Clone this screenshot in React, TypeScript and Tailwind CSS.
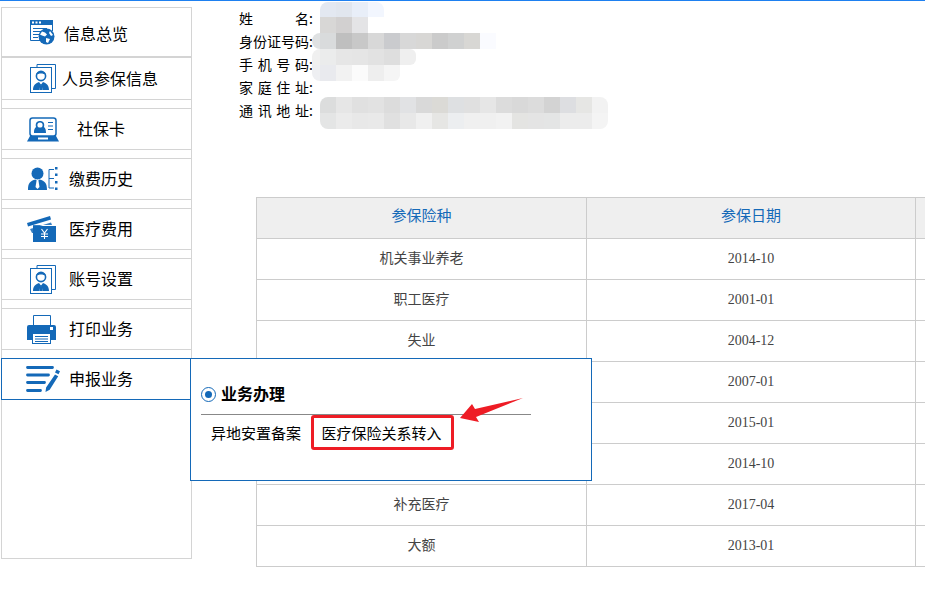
import type { ReactNode } from 'react';

const BLUE = '#1469b8';

function Svg({ w, h, children }: { w: number; h: number; children: ReactNode }) {
    return (
        <svg width={w} height={h} viewBox={`0 0 ${w} ${h}`} className="block shrink-0">
            {children}
        </svg>
    );
}

function BrowserIcon() {
    return (
        <Svg w={25} h={25}>
            <path d="M0.5 0.5H22.5V11M0.5 0.5V20.5H11" fill="none" stroke={BLUE} />
            <rect x="0" y="0" width="23" height="5" fill={BLUE} />
            <rect x="2" y="1.5" width="2" height="2" fill="#fff" />
            <rect x="5.5" y="1.5" width="2" height="2" fill="#fff" />
            <rect x="9" y="1.5" width="2" height="2" fill="#fff" />
            <path d="M3 8.5H17M3 11.5H12M3 14.5H9M3 17.5H8" stroke={BLUE} />
            <circle cx="16.5" cy="16.5" r="8" fill={BLUE} />
            <path d="M12 11.5l3 1 2 2-2 2-3-1-2-1zM16 18l4 1-2 4-2-1zM20 11l3 4-2 1-2-3z" fill="#fff" />
        </Svg>
    );
}

function PersonDocIcon() {
    return (
        <Svg w={26} h={29}>
            <path d="M7 3.5V0.5H25.5V24.5H22" fill="none" stroke={BLUE} />
            <rect x="0.5" y="3.5" width="21" height="25" fill="#fff" stroke={BLUE} />
            <circle cx="11" cy="12" r="4.6" fill="#fff" stroke={BLUE} strokeWidth="1.6" />
            <path d="M6 11c1-5 9-5 10 0-3-2-7-2-10 0z" fill={BLUE} />
            <path d="M3 26c0-5 3-7 6-8l1.5 2-1 6zM19 26c0-5-3-7-6-8l-1.5 2 1 6z" fill={BLUE} />
            <path d="M10.2 20h1.6l.6 6h-2.8z" fill={BLUE} />
        </Svg>
    );
}

function CardIcon() {
    return (
        <Svg w={32} h={25}>
            <rect x="3" y="1" width="26" height="18" rx="2.5" fill="#fff" stroke={BLUE} strokeWidth="1.5" />
            <path d="M7 16c0-4 1-5 2-6-1-4 1-6 4-6s5 2 4 6c1 1 2 2 2 6z" fill={BLUE} />
            <circle cx="13" cy="8" r="2.6" fill="#fff" />
            <path d="M21 5.500h5M21 9h5M21 12.500h5" stroke={BLUE} strokeWidth="1.2" />
            <path d="M3 19h26l3 5.500H0z" fill={BLUE} />
            <rect x="11" y="20.500" width="10" height="2" fill="#fff" />
        </Svg>
    );
}

function TreeUserIcon() {
    return (
        <Svg w={30} h={24}>
            <circle cx="9.500" cy="6.500" r="6" fill={BLUE} />
            <path d="M0 23c0-7 2-9 7.500-10.500l2 2 2-2c5.500 1.500 7.500 3.500 7.500 10.500z" fill={BLUE} />
            <path d="M8.500 14h2l1 6-2 2-2-2z" fill="#fff" />
            <path d="M21 2.500V21M21 2.500h5M21 11.500h5M21 21h5" fill="none" stroke={BLUE} />
            <rect x="27" y="0" width="2.500" height="2.500" fill={BLUE} />
            <rect x="27" y="6.500" width="2.500" height="2.500" fill={BLUE} />
            <rect x="27" y="14" width="2.500" height="2.500" fill={BLUE} />
            <rect x="27" y="20.500" width="2.500" height="2.500" fill={BLUE} />
        </Svg>
    );
}

function MoneyIcon() {
    return (
        <Svg w={29} h={26}>
            <path d="M0 7L23 0l1 3.500L1 10.500z" fill={BLUE} />
            <path d="M3 13l21-6.500 1 2.500H6v8H5z" fill={BLUE} opacity="0.85" />
            <rect x="6" y="10" width="23" height="16" fill={BLUE} />
            <path d="M14.500 13l3 4 3-4M14 18h7M14 20.500h7M17.500 17v6" fill="none" stroke="#fff" strokeWidth="1.100" />
        </Svg>
    );
}

function PrinterIcon() {
    return (
        <Svg w={29} h={29}>
            <path d="M6.500 10V0.500H23.500V10" fill="none" stroke={BLUE} />
            <path d="M2 10h25a2 2 0 0 1 2 2v13h-5v-7H5v7H0V12a2 2 0 0 1 2-2z" fill={BLUE} />
            <rect x="23" y="12" width="3" height="3" fill="#fff" />
            <rect x="5.500" y="18.500" width="18" height="10" fill="#fff" stroke={BLUE} />
            <path d="M8 21.500h13M8 24h13M8 26.500h13" stroke={BLUE} />
        </Svg>
    );
}

function ListPenIcon() {
    return (
        <Svg w={34} h={26}>
            <path d="M1.500 1.500h25M1.500 9h21M1.500 16.500h17M1.500 24.500h13" stroke={BLUE} strokeWidth="2.800" strokeLinecap="round" />
            <path d="M30.500 3.500l3.500 1.800-1.500 3-3.500-1.800zM29 8.500l3.200 1.700-8.500 13.500-4.200 2.300 .6-4.500z" fill={BLUE} />
        </Svg>
    );
}

const menu = [
    { label: '信息总览', icon: <BrowserIcon />, box: 'h-[50px] pl-[28px] border-b-2', text: 'ml-[9px] translate-y-px' },
    { label: '人员参保信息', icon: <PersonDocIcon />, box: 'h-[42px] pl-[28px] border-b', text: 'ml-[6px] -translate-y-px' },
    { label: '社保卡', icon: <CardIcon />, box: 'mt-[8px] h-[42px] pl-[25px] border-y', text: 'ml-[18px] -translate-y-px' },
    { label: '缴费历史', icon: <TreeUserIcon />, box: 'mt-[8px] h-[42px] pl-[26px] border-y', text: 'ml-[11px] -translate-y-px' },
    { label: '医疗费用', icon: <MoneyIcon />, box: 'mt-[8px] h-[42px] pl-[25px] border-y', text: 'ml-[13px] -translate-y-px' },
    { label: '账号设置', icon: <PersonDocIcon />, box: 'mt-[8px] h-[42px] pl-[28px] border-y', text: 'ml-[13px] -translate-y-px' },
    { label: '打印业务', icon: <PrinterIcon />, box: 'mt-[8px] h-[42px] pl-[25px] border-y', text: 'ml-[13px] -translate-y-px' },
];

const infoRows = ['姓名', '身份证号码', '手机号码', '家庭住址', '通讯地址'];

// the popup covers the names of rows 4 to 6
const rows = [
    ['机关事业养老', '2014-10'],
    ['职工医疗', '2001-01'],
    ['失业', '2004-12'],
    ['', '2007-01'],
    ['', '2015-01'],
    ['', '2014-10'],
    ['补充医疗', '2017-04'],
    ['大额', '2013-01'],
];

// mosaic over the personal data, 16px blocks; lead = a half block on the left
const mosaic: { box: string; lead?: boolean; colors: string[] }[] = [
    { box: 'mt-[1px] h-[15px] ml-[95px] rounded-t-lg', colors: ['#e3e8f1', '#e1e6ee', '#e8eef8', '#f2f6fe'] },
    { box: 'h-[16px] ml-[95px]', colors: ['#d8d7d6', '#d2d0d0', '#e4e4e6'] },
    { box: 'h-[16px] ml-[87px] rounded-l-lg', lead: true, colors: ['#dfe1e2', '#d9dbdc', '#bfbfbf', '#c8c8c8', '#d8d8d8', '#cacbce', '#d8d8d8', '#d8d7d5', '#cbcbcb', '#d0d1d1', '#d8d7d4', '#fafbff'] },
    { box: 'h-[16px] ml-[87px] rounded-tl-lg rounded-r-md', lead: true, colors: ['#f0f0f0', '#ebecec', '#e6e6e6', '#e5e5e5', '#e2e2e2', '#dedede', '#efefef'] },
    { box: 'h-[16px] ml-[87px] rounded-bl-lg rounded-br-md', lead: true, colors: ['#eeeff2', '#e9eaee', '#f2f2f2', '#fbfbfb', '#eeeeee', '#f5f5f5'] },
    { box: 'mt-[16px] h-[16px] ml-[95px] rounded-t-lg', colors: ['#dcdddd', '#e6e6e6', '#e0e0e0', '#e2e2e2', '#dcdcdc', '#e1e2e4', '#d9d9d9', '#dbdad6', '#dee0e2', '#e0e0e0', '#e6e6e6', '#dcdcdc', '#d9d9d9', '#dcdcdc', '#d3d3d3', '#dddee1', '#e6e6e4', '#f2f2f2'] },
    { box: 'h-[16px] ml-[95px] rounded-b-lg', colors: ['#e4e5e5', '#ebebeb', '#e8e8e8', '#e9e9e9', '#e0e0e0', '#e8e8e8', '#f0f0f0', '#e6e6e4', '#eceef0', '#f0f0f0', '#f0f0f0', '#f2f2f2', '#e4e4e2', '#e4e4e4', '#e4e5e5', '#ececec', '#ececec', '#f4f4f4'] },
];

const cellBorder = 'border-r border-[#cccccc]';

export default function App() {
    return (
        <div
            className="relative w-[925px] h-[602px] overflow-hidden bg-white border-t border-[#1e80f0] text-black text-[14px]"
            style={{ fontFamily: '"Noto Sans CJK SC", sans-serif' }}
        >
            <div className="flex items-start">
                {/* Sidebar */}
                <aside className="ml-px mt-[6px] w-[191px] h-[552px] shrink-0 border border-[#d4d4d4] bg-white text-[16px]">
                    {menu.map((item) => (
                        <div key={item.label} className={`flex items-center border-[#d4d4d4] ${item.box}`}>
                            {item.icon}
                            <span className={item.text}>{item.label}</span>
                        </div>
                    ))}
                    <div className="mt-[8px] h-[42px] pl-[24px] -ml-px flex items-center border border-[#1469b8]">
                        <ListPenIcon />
                        <span className="ml-[9px] -translate-y-px">申报业务</span>
                    </div>
                </aside>

                {/* Main */}
                <main className="relative flex-1 min-w-0 pl-[47px] pt-[5px]">
                    <div className="flex flex-col">
                        {infoRows.map((label) => (
                            <div key={label} className="flex h-[23px] items-center leading-none">
                                <span className="w-[70px] [text-align-last:justify]">{label}</span>
                                <span>:</span>
                            </div>
                        ))}
                    </div>

                    {/* blurred personal data */}
                    <div className="absolute left-[33px] top-0 w-[500px] flex flex-col">
                        {mosaic.map((row, i) => (
                            <div key={i} className={`flex overflow-hidden w-fit ${row.box}`}>
                                {row.colors.map((c, j) => (
                                    <div
                                        key={j}
                                        className={row.lead && j === 0 ? 'w-[8px] h-full' : 'w-[16px] h-full'}
                                        style={{ backgroundColor: c }}
                                    />
                                ))}
                            </div>
                        ))}
                    </div>

                    {/* Table */}
                    <div className="mt-[76px] ml-[17px] w-[800px] border border-[#cccccc] border-b-0">
                        <div className="grid grid-cols-[330px_329px_1fr] h-[41px] bg-[#efefef] text-[#1469b8] text-[15px] border-b border-[#cccccc]">
                            <div className={`flex items-center justify-center pb-[6px] ${cellBorder}`}>参保险种</div>
                            <div className={`flex items-center justify-center pb-[6px] ${cellBorder}`}>参保日期</div>
                            <div />
                        </div>
                        {rows.map((row, i) => (
                            <div key={i} className="grid grid-cols-[330px_329px_1fr] h-[41px] text-[#444444] border-b border-[#cccccc]">
                                <div className={`flex items-center justify-center pb-[3px] ${cellBorder}`}>{row[0]}</div>
                                <div
                                    className={`flex items-center justify-center pb-[2px] ${cellBorder}`}
                                    style={{ fontFamily: '"Liberation Serif", serif' }}
                                >
                                    {row[1]}
                                </div>
                                <div />
                            </div>
                        ))}
                    </div>
                </main>
            </div>

            {/* Popup */}
            <div className="absolute left-[190px] top-[357px] w-[402px] h-[123px] border border-[#1469b8] bg-white pl-[10px] pt-[21px]">
                <div className="flex items-center h-[28px]">
                    <span className="flex items-center justify-center w-[15px] h-[15px] rounded-full border-[1.500px] border-[#1469b8]">
                        <span className="w-[7px] h-[7px] rounded-full bg-[#1469b8]" />
                    </span>
                    <span className="ml-[5px] text-[16px] font-bold pb-[2px]">业务办理</span>
                </div>
                <div className="w-[330px] h-px bg-[#888888] mt-[6px]" />
                <div className="flex items-center text-[15px] leading-none">
                    <span className="ml-[10px]">异地安置备案</span>
                    <span className="ml-[10px] h-[35px] w-[143px] flex items-center justify-center pr-[2px] rounded-[3px] border-[3px] border-[#ee1c25]">
                        医疗保险关系转入
                    </span>
                </div>
                <svg className="absolute left-[268px] top-[39px]" width="66" height="26" viewBox="0 0 66 26">
                    <path d="M1 20L13 6l3 5L64 0 17 19l3 5z" fill="#ee1c25" />
                </svg>
            </div>
        </div>
    );
}
